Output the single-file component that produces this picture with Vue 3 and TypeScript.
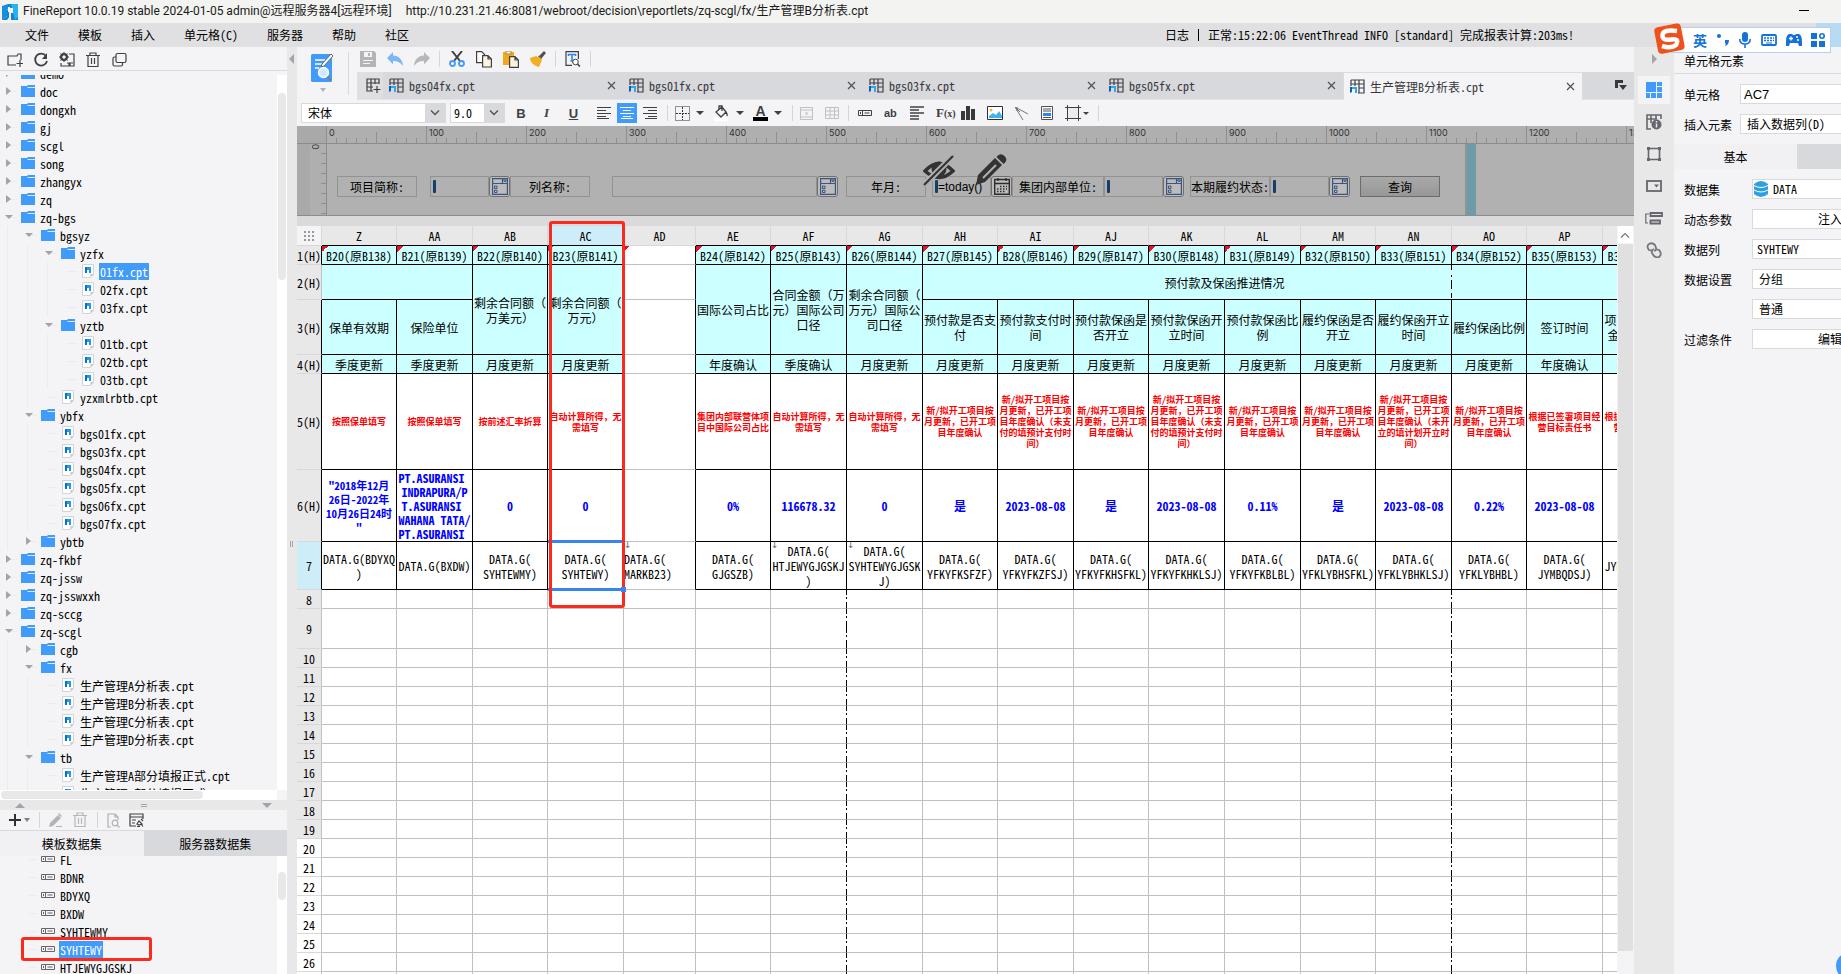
<script setup lang="ts">
import { h, type FunctionalComponent } from 'vue'

interface IconDef { w: number; h: number; s: string }

const stroke = 'fill="none" stroke="#404044" stroke-width="1.2"'
const gridBase = '<path d="M1 1h13v13H8M1 1v6M1 5h13M5 1v6M9 1v13M9 9h5" fill="none" stroke="#404044" stroke-width="1.2"/>'

const icons: Record<string, IconDef> = {
  logo: { w: 16, h: 16, s: '<path d="M0 2l6-2v5l-1 1v6l-5 4z" fill="#1590e0"/><path d="M6 0h10v16H9V9h3V5H8v7l-3 4H0l5-4V6h3V3H6z" fill="#0f86d8"/><path d="M9 0h7v13l-3 3z" fill="#25b4ee"/><path d="M6 4h5v4H9v6H7V8H6z" fill="#f3f3f1"/>' },
  newFolder: { w: 16, h: 16, s: `<path d="M9 13H1V4h9l1-2h3v6M13 8v7M9.500 11.500h6.500" ${stroke}/>` },
  refresh: { w: 16, h: 16, s: '<path d="M13 4a6 6 0 1 0 1 5" fill="none" stroke="#404044" stroke-width="1.8"/><path d="M14 1v6H9z" fill="#404044"/>' },
  gearBox: { w: 16, h: 16, s: `<circle cx="5" cy="5" r="3" fill="none" stroke="#404044" stroke-width="2"/><path d="M5 0v10M0 5h10M1.500 1.500l7 7M8.500 1.500l-7 7" stroke="#404044"/><circle cx="5" cy="5" r="1.500" fill="#f4f4f7"/><path d="M10 2h5v12H2v-3M8 11h2v3M11 14v-3h3" ${stroke}/>` },
  trash: { w: 16, h: 16, s: `<path d="M1 3.500h14M5 3V1h6v2M3 3.500v11h10v-11M6.500 6v6M9.500 6v6" ${stroke}/>` },
  trashOff: { w: 16, h: 16, s: '<path d="M1 3.500h14M5 3V1h6v2M3 3.500v11h10v-11M6.500 6v6M9.500 6v6" fill="none" stroke="#b8b8bc" stroke-width="1.200"/>' },
  copyBox: { w: 16, h: 16, s: `<rect x="5" y="1.500" width="10" height="9" rx="1.500" ${stroke}/><path d="M5 5H3.500Q2 5 2 6.500v6Q2 14 3.500 14H10q1.500 0 1.500-1.500V11" ${stroke}/>` },
  folder: { w: 14, h: 12, s: '<path d="M0 1h6l1-1h7v12H0z" fill="#409bfa"/><path d="M6.500 2.500H14" stroke="#d5e9ff"/>' },
  file: { w: 12, h: 14, s: '<path d="M.5.5h11v10l-3 3h-8z" fill="#fff" stroke="#d4d4d8"/><path d="M11.500 10h-3v3.500z" fill="#c8c8cc"/><path d="M3 3h2v6H3z" fill="#0a6fc8"/><path d="M5 3h4v6H7V6H5z" fill="#1c9ce6"/>' },
  column: { w: 14, h: 6, s: '<path d="M.5.5h13v5H.5zM4.500.5v5M6.500 3h5" fill="none" stroke="#66666a"/><path d="M2 2h1v2H2z" fill="#66666a"/>' },
  columnDark: { w: 14, h: 6, s: '<path d="M.5.5h13v5H.5zM4.500.5v5M6.500 3h5" fill="none" stroke="#404044"/><path d="M2 2h1v2H2z" fill="#404044"/>' },
  plus: { w: 14, h: 14, s: '<path d="M7 1v12M1 7h12" stroke="#303034" stroke-width="2"/>' },
  pencilOff: { w: 14, h: 14, s: '<path d="M0 14l1-4 8-8 3 3-8 8zM9 1l1-1 3 3-1 1z" fill="#b4b4b8"/><path d="M7 13.500h6" stroke="#b4b4b8"/>' },
  pageSearch: { w: 13, h: 15, s: '<path d="M4 14H1V1h7l3 3v3M8 1v3h3" fill="none" stroke="#b0b0b4" stroke-width="1.200"/><circle cx="8" cy="10" r="2.800" fill="none" stroke="#b0b0b4" stroke-width="1.200"/><path d="M10 12l2.500 2.500" stroke="#b0b0b4" stroke-width="1.200"/>' },
  dsEdit: { w: 15, h: 14, s: `<path d="M7 13H1V1h13v5M1 4h13M3 7h4M3 10h3" ${stroke}/><path d="M8 11l2-3 3 3-3 1zM12 6l2 2M8 13.500h3M12 11l2 2.500" ${stroke}/>` },
  big: { w: 24, h: 30, s: '<rect x="0" y="2" width="21" height="28" rx="1.500" fill="#409bfa"/><path d="M4 8h10M4 12h7M4 16h4" stroke="#fff" stroke-width="1.600"/><path d="M20 2l2 2-9 10-3 1 1-3z" fill="#fff" stroke="#66666a"/><circle cx="12.500" cy="20.500" r="5" fill="#d4e9ff" stroke="#fff" stroke-width="1.500"/><path d="M16.500 24.500l3.500 4" stroke="#808084" stroke-width="2"/>' },
  save: { w: 16, h: 16, s: '<path d="M0 0h14l2 2v14H0z" fill="#b4b4b8"/><path d="M4 1h8v5H4z" fill="#f4f4f7"/><path d="M8 2h2v3H8z" fill="#b4b4b8"/><path d="M3 9.500h10M3 12.500h7" stroke="#f4f4f7"/>' },
  undo: { w: 16, h: 14, s: '<path d="M6 0v3.500C12 3.500 15.500 8 16 14 13 10 10 9 6 9v3.500L0 6z" fill="#7cb8f6"/>' },
  redo: { w: 16, h: 14, s: '<path d="M10 0v3.500C4 3.500.500 8 0 14 3 10 6 9 10 9v3.500L16 6z" fill="#b8b8bc"/>' },
  cut: { w: 16, h: 16, s: '<path d="M3 0l8 10M13 0L5 10" stroke="#404044" stroke-width="2"/><circle cx="3.500" cy="12.500" r="2.500" fill="none" stroke="#409bfa" stroke-width="1.800"/><circle cx="12.500" cy="12.500" r="2.500" fill="none" stroke="#409bfa" stroke-width="1.800"/>' },
  copy: { w: 16, h: 17, s: '<path d="M.6.6h5l3 3v8h-8z" fill="#fff" stroke="#404044" stroke-width="1.200"/><path d="M6.600 4.600h5.400l3.400 3.400v8H6.600zM12 4.600v3.400h3.400" fill="#fdf5df" stroke="#404044" stroke-width="1.200"/>' },
  paste: { w: 16, h: 17, s: '<path d="M0 1h11v13H0z" fill="#f0a81c"/><path d="M3 0h5v3H3z" fill="#fff" stroke="#b08030"/><path d="M6.600 5.600h5.400l3.400 3.400v7.400H6.600zM12 5.600v3.400h3.400" fill="#fdf5df" stroke="#404044" stroke-width="1.200"/>' },
  brush: { w: 16, h: 16, s: '<path d="M14 0l2 2-5 6-3-2z" fill="#505058"/><path d="M6 5l6 4-3 7C4 15 0 11 0 7z" fill="#f0b020"/><path d="M8 5l4 3" stroke="#d08810"/>' },
  tSearch: { w: 16, h: 16, s: `<path d="M7 14.400H1V.6h12.400V8" ${stroke}/><path d="M3.500 5V3.500h7V5M7 3.500V10M5.500 10h3" fill="none" stroke="#2f86ea" stroke-width="1.600"/><circle cx="10.500" cy="11" r="2.800" fill="#fff" stroke="#404044"/><path d="M12.500 13l2.500 2.500" stroke="#404044" stroke-width="1.500"/>` },
  gridPlus: { w: 15, h: 15, s: `<path d="M7 13H1V1h12v5M1 5h12M1 9h6M5 1v12M9 1v5M11 8v7M7.500 11.500h7" ${stroke}/>` },
  sheet: { w: 15, h: 15, s: `${gridBase}<path d="M0 8h2v5l-2 1z" fill="#0a60b0"/><path d="M2 8h5v6H5v-4H2z" fill="#35a5e4"/>` },
  close: { w: 9, h: 9, s: '<path d="M1 1l7 7M8 1L1 8" stroke="#505054" stroke-width="1.200"/>' },
  tabList: { w: 12, h: 11, s: '<path d="M0 0h8v3H3v5H0z" fill="#38383c"/><path d="M4 5h8l-4 5z" fill="#38383c"/>' },
  chevron: { w: 10, h: 6, s: '<path d="M1 .5l4 4 4-4" fill="none" stroke="#505054" stroke-width="1.300"/>' },
  chevronUp: { w: 10, h: 6, s: '<path d="M1 5.500l4-4 4 4" fill="none" stroke="#77777a" stroke-width="1.200"/>' },
  alignL: { w: 14, h: 12, s: '<path d="M0 .5h14M0 3.500h9M0 6.500h14M0 9.500h9M0 11.500h12" stroke="#404044" stroke-width="1"/>' },
  alignC: { w: 14, h: 12, s: '<path d="M0 .5h14M3 3.500h8M0 6.500h14M3 9.500h8M1 11.500h12" stroke="#fff" stroke-width="1"/>' },
  alignR: { w: 14, h: 12, s: '<path d="M0 .5h14M5 3.500h9M0 6.500h14M5 9.500h9M2 11.500h12" stroke="#404044" stroke-width="1"/>' },
  border: { w: 15, h: 15, s: '<path d="M.5.5h14v14H.5z" fill="none" stroke="#303034" stroke-dasharray="1 1"/><path d="M7.500 1v13M1 7.500h13" stroke="#303034" stroke-dasharray="2 1"/>' },
  bucket: { w: 16, h: 16, s: '<path d="M0 12h14v4H0z" fill="#fff"/><path d="M2 7l6-5 4 5-5 5zM5 4V1h3v5M12 7q1.500 2 1 4" fill="none" stroke="#404044" stroke-width="1.300"/>' },
  merge: { w: 13, h: 13, s: '<path d="M.5.5h12v12H.5zM.5 3h12M.5 10h12" fill="none" stroke="#c0c0c4"/><path d="M5 5h3v3H5z" fill="#d8d8dc"/>' },
  unmerge: { w: 14, h: 12, s: '<path d="M.5.5h13v11H.5zM.5 4h13M.5 8h13M5 .5v11M9.500.5v11" fill="none" stroke="#c0c0c4"/>' },
  para: { w: 14, h: 14, s: '<path d="M0 1h14M0 4h9M0 7h14M0 10h9M0 13h9" stroke="#404044" stroke-width="1.500"/>' },
  chart: { w: 14, h: 14, s: '<path d="M0 5h4v9H0zM5 0h4v14H5zM10 3h4v11h-4z" fill="#38383c"/>' },
  image: { w: 16, h: 14, s: '<path d="M.5.5h15v13H.5z" fill="#fff" stroke="#303034"/><path d="M2 10l4-3 3 2 3-4 3 5v2H2z" fill="#3fb4f0"/><circle cx="4" cy="4" r="1.500" fill="#f0b840"/>' },
  diag: { w: 14, h: 13, s: '<path d="M0 0l13 7M0 0l8 13" stroke="#77777a" fill="none"/><path d="M0 0l5 5M2 0l0 4" stroke="#77777a" fill="none"/>' },
  doc: { w: 12, h: 14, s: '<path d="M.5.5h11v13H.5z" fill="#fff" stroke="#505054"/><path d="M2 3h8M2 5h8M2 11.500h8" stroke="#505054"/><path d="M2 7h8v3H2z" fill="#2f86ea"/>' },
  rect: { w: 16, h: 16, s: '<path d="M2.500 2.500h11v11h-11z" fill="#ececee"/><path d="M0 2.500h16M0 13.500h16M2.500 0v16M13.500 0v16" stroke="#404044"/>' },
  combo: { w: 16, h: 17, s: '<path d="M.6.6h14.800v15.800H.6zM.6 5.500h14.800M10.500.6v5" fill="none" stroke="#3d5680" stroke-width="1.200"/><path d="M11.500 2h3l-1.500 2zM2.500 8h2.500v2.500H2.500zM2.500 12.200h2.500v2.300H2.500z" fill="none" stroke="#3d5680"/>' },
  calendar: { w: 16, h: 17, s: '<path d="M.7 1.500h14.600v14.800H.7zM.7 5.500h14.600M4 0v3M12 0v3" fill="none" stroke="#2c2c2e" stroke-width="1.400"/><path d="M6 8.500h7M3 11h10M3 13.500h8" stroke="#2c2c2e" stroke-width="1.400" stroke-dasharray="1.500 1.500"/>' },
  eyeOff: { w: 32, h: 32, s: '<path d="M2 17Q16 2 30 17 16 30 2 17z" fill="none" stroke="#333" stroke-width="3.500"/><circle cx="16" cy="15" r="7.500" fill="#333"/><path d="M1 31L31 1" stroke="#b0b0b0" stroke-width="6"/><path d="M1 31L30 2" stroke="#333" stroke-width="2.200"/>' },
  pencil: { w: 32, h: 32, s: '<path d="M1 31l2-10L20 4l7 7L10 28z" fill="#333"/><path d="M8 24L21 11" stroke="#b0b0b0" stroke-width="2"/><path d="M21.500 3l2-2q3-2 6 1t1 6l-2 2z" fill="#333"/>' },
  panelCell: { w: 16, h: 16, s: '<path d="M0 0h10v10H0zM11 0h5v4h-5zM11 5h5v5h-5zM0 11h4v5H0zM5 11h5v5H5zM11 11h5v5h-5z" fill="#409bfa"/>' },
  panelInfo: { w: 16, h: 16, s: '<path d="M5 15H1V1h14v4M1 5h10M5 1v8M10 1v4" fill="none" stroke="#666670" stroke-width="1.600"/><circle cx="10.500" cy="10.500" r="5" fill="#666670"/><path d="M10.500 7v1.500M10.500 9.500v4" stroke="#e8e8e8" stroke-width="1.500"/>' },
  panelFrame: { w: 16, h: 16, s: '<path d="M2.500 2.500h11v11h-11z" fill="none" stroke="#666670" stroke-width="1.600"/><path d="M1 1h3v3H1zM12 1h3v3h-3zM1 12h3v3H1zM12 12h3v3h-3z" fill="#666670"/>' },
  panelWidget: { w: 16, h: 12, s: '<rect x="1" y="1" width="14" height="10" fill="none" stroke="#666670" stroke-width="1.800"/><path d="M8 4.500h5l-2.500 3z" fill="#666670"/>' },
  panelCond: { w: 18, h: 13, s: '<path d="M4 2H.8v9H3" fill="none" stroke="#666670" stroke-width="1.200"/><path d="M5.500 1h11.500v3H5.500zM5.500 8.500h9.500v3H5.500z" fill="none" stroke="#666670" stroke-width="1.800"/>' },
  panelLink: { w: 16, h: 16, s: '<path d="M7 9L3 8Q0 4 3 2t6 1l1 3q1 2-2 3M9 7l4 1q3 3 1 6t-6 0l-2-3q-1-3 2-4" fill="none" stroke="#77777e" stroke-width="1.800"/>' },
  db: { w: 14, h: 16, s: '<path d="M0 3q7-6 14 0v10q-7 6-14 0z" fill="#2f9fe0"/><path d="M0 4.500q7 4 14 0M0 9q7 4 14 0" fill="none" stroke="#fff"/>' },
  sogou: { w: 32, h: 32, s: '<rect x="2" y="2" width="27" height="27" rx="4" fill="#f0511c" transform="rotate(-11 16 16)"/><path d="M23 8Q9 6 8.500 12T17 16.500t5 5.500Q17 26 8 23" fill="none" stroke="#fff" stroke-width="4.500"/>' },
  punct: { w: 14, h: 14, s: '<circle cx="3" cy="3" r="2" fill="#1473d8"/><path d="M9 7h4q0 5-4 6l1-2.500H9z" fill="#1473d8"/>' },
  mic: { w: 12, h: 16, s: '<rect x="3" y="0" width="6" height="10" rx="3" fill="#1473d8"/><path d="M.8 7q0 5 5.200 5t5.200-5M6 12v4" fill="none" stroke="#1473d8" stroke-width="1.600"/>' },
  keys: { w: 16, h: 12, s: '<rect x="1" y="1" width="14" height="10" rx="1" fill="none" stroke="#1473d8" stroke-width="1.800"/><path d="M3 4h10M3 6.500h10" stroke="#1473d8" stroke-width="1.400" stroke-dasharray="2 1"/><path d="M5 9h6" stroke="#1473d8"/>' },
  pad: { w: 16, h: 14, s: '<path d="M3 1h3l1 1h2l1-1h3q3 1 3 8v4h-3l-1-3H4l-1 3H0V9q0-7 3-8z" fill="#1473d8"/><path d="M3 5.500h4M5 3.500v4M10 4h2M11 7h2" stroke="#fff" stroke-width="1.300"/><path d="M4 11h8" stroke="#fff"/>' },
  apps: { w: 14, h: 14, s: '<path d="M0 0h6v6H0zM0 8h6v6H0zM8 8h6v6H8z" fill="#1473d8"/><circle cx="11" cy="3" r="2.200" fill="none" stroke="#1473d8" stroke-width="1.600"/>' },
}

const Ico: FunctionalComponent<{ n: string }> = (p) => {
  const d = icons[p.n]
  return h('svg', { width: d.w, height: d.h, viewBox: `0 0 ${d.w} ${d.h}`, 'aria-hidden': 'true', class: 'ico', innerHTML: d.s })
}
Ico.props = ['n']

const menus = ['文件', '模板', '插入', '单元格(C)', '服务器', '帮助', '社区']

type Kind = 'closed' | 'open' | 'file'
interface Node { level: number; kind: Kind; name: string }
const node = (level: number, kind: Kind, ...names: string[]): Node[] => names.map((name) => ({ level, kind, name }))
const tree: Node[] = [
  ...node(0, 'closed', 'demo', 'doc', 'dongxh', 'gj', 'scgl', 'song', 'zhangyx', 'zq'),
  ...node(0, 'open', 'zq-bgs'),
  ...node(1, 'open', 'bgsyz'),
  ...node(2, 'open', 'yzfx'),
  ...node(3, 'file', '01fx.cpt', '02fx.cpt', '03fx.cpt'),
  ...node(2, 'open', 'yztb'),
  ...node(3, 'file', '01tb.cpt', '02tb.cpt', '03tb.cpt'),
  ...node(2, 'file', 'yzxmlrbtb.cpt'),
  ...node(1, 'open', 'ybfx'),
  ...node(2, 'file', 'bgs01fx.cpt', 'bgs03fx.cpt', 'bgs04fx.cpt', 'bgs05fx.cpt', 'bgs06fx.cpt', 'bgs07fx.cpt'),
  ...node(1, 'closed', 'ybtb'),
  ...node(0, 'closed', 'zq-fkbf', 'zq-jssw', 'zq-jsswxxh', 'zq-sccg'),
  ...node(0, 'open', 'zq-scgl'),
  ...node(1, 'closed', 'cgb'),
  ...node(1, 'open', 'fx'),
  ...node(2, 'file', '生产管理A分析表.cpt', '生产管理B分析表.cpt', '生产管理C分析表.cpt', '生产管理D分析表.cpt'),
  ...node(1, 'open', 'tb'),
  ...node(2, 'file', '生产管理A部分填报正式.cpt', '生产管理B部分填报正式.cpt'),
]
const fields = ['FL', 'BDNR', 'BDYXQ', 'BXDW', 'SYHTEWMY', 'SYHTEWY', 'HTJEWYGJGSKJ']

const tabs = ['bgs04fx.cpt', 'bgs01fx.cpt', 'bgs03fx.cpt', 'bgs05fx.cpt', '生产管理B分析表.cpt']
const rulerMarks = Array.from({ length: 14 }, (_, i) => i * 100)
const panelIcons = ['panelCell', 'panelInfo', 'panelFrame', 'panelWidget', 'panelCond', 'panelLink']

interface Col { id: string; w: number; no: string; upd: string; note: string; val: string; data: string }
const col = (id: string, w: number, no: string, upd: string, note: string, val: string, data: string): Col => ({ id, w, no, upd, note, val, data })
const M = '月度更新'
const note3 = '新/拟开工项目按\n月更新，已开工项\n目年度确认'
const notePay = note3 + '（未支\n付的填预计支付时\n间）'
const noteOpen = note3 + '（未开\n立的填计划开立时\n间）'
const auto = '自动计算所得，无\n需填写'
const duty = '根据已签署项目经\n营目标责任书'
const cols: Col[] = [
  col('Z', 75, 'B20(原B138)', '季度更新', '按照保单填写', '"2018年12月\n26日-2022年\n10月26日24时\n"', 'DATA.G(BDYXQ\n)'),
  col('AA', 76, 'B21(原B139)', '季度更新', '按照保单填写', 'PT.ASURANSI \nINDRAPURA/P\nT.ASURANSI \nWAHANA TATA/\nPT.ASURANSI ', 'DATA.G(BXDW)'),
  col('AB', 75, 'B22(原B140)', M, '按前述汇率折算', '0', 'DATA.G(\nSYHTEWMY)'),
  col('AC', 76, 'B23(原B141)', M, auto, '0', 'DATA.G(\nSYHTEWY)'),
  col('AD', 72, '', '', '', '', 'DATA.G(\nMARKB23)'),
  col('AE', 75, 'B24(原B142)', '年度确认', '集团内部联营体项\n目中国际公司占比', '0%', 'DATA.G(\nGJGSZB)'),
  col('AF', 76, 'B25(原B143)', '季度确认', auto, '116678.32', 'DATA.G(\nHTJEWYGJGSKJ\n)'),
  col('AG', 76, 'B26(原B144)', M, auto, '0', 'DATA.G(\nSYHTEWYGJGSK\nJ)'),
  col('AH', 75, 'B27(原B145)', M, note3, '是', 'DATA.G(\nYFKYFKSFZF)'),
  col('AI', 76, 'B28(原B146)', M, notePay, '2023-08-08', 'DATA.G(\nYFKYFKZFSJ)'),
  col('AJ', 75, 'B29(原B147)', M, note3, '是', 'DATA.G(\nYFKYFKHSFKL)'),
  col('AK', 76, 'B30(原B148)', M, notePay, '2023-08-08', 'DATA.G(\nYFKYFKHKLSJ)'),
  col('AL', 76, 'B31(原B149)', M, note3, '0.11%', 'DATA.G(\nYFKYFKBLBL)'),
  col('AM', 75, 'B32(原B150)', M, note3, '是', 'DATA.G(\nYFKLYBHSFKL)'),
  col('AN', 76, 'B33(原B151)', M, noteOpen, '2023-08-08', 'DATA.G(\nYFKLYBHKLSJ)'),
  col('AO', 75, 'B34(原B152)', M, note3, '0.22%', 'DATA.G(\nYFKLYBHBL)'),
  col('AP', 76, 'B35(原B153)', '年度确认', duty, '2023-08-08', 'DATA.G(\nJYMBQDSJ)'),
  col('AQ', 76, 'B36(原B154)', '年度确认', duty, '', 'DATA.G(\nJYMBXMZJEWYS\n)'),
]
interface Head { t: string; cs?: number; rs?: number; blank?: boolean }
const row2: Head[] = [
  { t: '', cs: 2 }, { t: '剩余合同额（\n万美元）', rs: 2 }, { t: '剩余合同额（\n万元）', rs: 2 }, { t: '', blank: true },
  { t: '国际公司占比', rs: 2 }, { t: '合同金额（万\n元）国际公司\n口径', rs: 2 }, { t: '剩余合同额（\n万元）国际公\n司口径', rs: 2 },
  { t: '预付款及保函推进情况', cs: 8 }, { t: '', cs: 2 },
]
const row3: Head[] = [
  { t: '保单有效期' }, { t: '保险单位' }, { t: '', blank: true }, { t: '预付款是否支\n付' }, { t: '预付款支付时\n间' }, { t: '预付款保函是\n否开立' },
  { t: '预付款保函开\n立时间' }, { t: '预付款保函比\n例' }, { t: '履约保函是否\n开立' }, { t: '履约保函开立\n时间' }, { t: '履约保函比例' }, { t: '签订时间' }, { t: '项目经营目标\n金额(万元) ' },
]
const emptyRows = Array.from({ length: 20 }, (_, i) => i + 8)
</script>

<template>
  <div class="app">
    <header class="title"><Ico n="logo" /><span class="t1">FineReport 10.0.19 stable 2024-01-05 admin@远程服务器4[远程环境]</span><span>http://10.231.21.46:8081/webroot/decision\reportlets/zq-scgl/fx/生产管理B分析表.cpt</span><button class="minimize" aria-label="最小化"></button></header>
    <nav class="menu">
      <button v-for="m in menus" :key="m">{{ m }}</button>
      <div class="log"><span>日志</span><i></i><span>正常:15:22:06 EventThread INFO [standard] 完成报表计算:203ms!</span></div>
    </nav>
    <div class="ime">
      <div class="ime-logo"><Ico n="sogou" /></div>
      <b>英</b><Ico n="punct" /><Ico n="mic" /><Ico n="keys" /><Ico n="pad" /><Ico n="apps" />
    </div>

    <div class="body">
      <aside class="left">
        <div class="ltools"><button v-for="i in ['newFolder', 'refresh', 'gearBox', 'trash', 'copyBox']" :key="i" :aria-label="i"><Ico :n="i" /></button></div>
        <div class="treebox">
          <ul class="tree">
            <li v-for="(n, k) in tree" :key="k">
              <span v-for="g in n.level" :key="g" class="guide"></span>
              <span class="twist" :class="n.kind"></span>
              <span class="nicon"><Ico :n="n.kind === 'file' ? 'file' : 'folder'" /></span>
              <button class="nname" :class="{ hit: n.name === '01fx.cpt' }">{{ n.name }}</button>
            </li>
          </ul>
          <div class="vbar"><i></i></div>
        </div>
        <div class="hbar"><i></i></div>
        <div class="split"><i class="up"></i><i class="eq"></i><i class="down"></i></div>
        <div class="dtools">
          <button aria-label="新增"><Ico n="plus" /></button><i class="caret gray"></i><i class="sep"></i>
          <button aria-label="编辑"><Ico n="pencilOff" /></button><button aria-label="删除"><Ico n="trashOff" /></button><i class="sep"></i>
          <button aria-label="预览"><Ico n="pageSearch" /></button><button aria-label="连接"><Ico n="dsEdit" /></button>
        </div>
        <div class="dtabs"><button class="on">模板数据集</button><button>服务器数据集</button></div>
        <div class="fieldbox">
          <ul>
            <li v-for="f in fields" :key="f" :class="{ marked: f === 'SYHTEWY' }"><Ico n="column" /><button class="nname" :class="{ hit: f === 'SYHTEWY' }">{{ f }}</button></li>
          </ul>
          <div class="vbar low"><i></i></div>
        </div>
      </aside>
      <div class="vsplit"><i class="fold"></i><i class="grip"></i></div>

      <main class="main">
        <div class="top">
          <div class="preview"><button aria-label="预览"><Ico n="big" /></button><i class="caret light"></i></div>
          <div class="topright">
            <div class="quick">
              <button aria-label="保存"><Ico n="save" /></button><button aria-label="撤销"><Ico n="undo" /></button><button aria-label="重做"><Ico n="redo" /></button><i class="sep"></i>
              <button aria-label="剪切"><Ico n="cut" /></button><button aria-label="复制"><Ico n="copy" /></button><button aria-label="粘贴"><Ico n="paste" /></button><button aria-label="格式刷"><Ico n="brush" /></button><i class="sep"></i>
              <button aria-label="查找"><Ico n="tSearch" /></button><i class="sep"></i>
            </div>
            <div class="tabs">
              <button class="newtab" aria-label="新建"><Ico n="gridPlus" /></button>
              <div v-for="(t, i) in tabs" :key="t" class="tab" :class="{ on: i === 4 }"><Ico n="sheet" /><span>{{ t }}</span><button aria-label="关闭"><Ico n="close" /></button></div>
              <button class="tablist" aria-label="标签列表"><Ico n="tabList" /></button>
            </div>
          </div>
        </div>
        <div class="format">
          <label class="sel font"><select aria-label="字体"><option>宋体</option></select><span><Ico n="chevron" /></span></label>
          <label class="sel size"><select aria-label="字号"><option>9.0</option></select><span><Ico n="chevron" /></span></label>
          <button class="f b">B</button><button class="f i">I</button><button class="f u">U</button>
          <button class="al"><Ico n="alignL" /></button><button class="al on"><Ico n="alignC" /></button><button class="al"><Ico n="alignR" /></button>
          <i class="sep"></i>
          <button class="dd"><Ico n="border" /><i class="caret"></i></button>
          <button class="dd"><Ico n="bucket" /><i class="caret"></i></button>
          <button class="dd"><span class="fontcolor">A</span><i class="caret"></i></button>
          <i class="sep"></i>
          <div class="grp"><button aria-label="合并"><Ico n="merge" /></button><button aria-label="拆分"><Ico n="unmerge" /></button></div>
          <i class="sep"></i>
          <div class="grp">
            <button aria-label="数据列"><Ico n="columnDark" /></button><button class="ab">ab</button><button aria-label="富文本"><Ico n="para" /></button><button class="fx">F<small>(x)</small></button>
            <button aria-label="图表"><Ico n="chart" /></button><button aria-label="图片"><Ico n="image" /></button><button aria-label="斜线"><Ico n="diag" /></button><button aria-label="子报表"><Ico n="doc" /></button><button class="rc" aria-label="悬浮元素"><Ico n="rect" /><i class="caret small"></i></button>
          </div>
          <i class="sep"></i>
        </div>

        <section class="param">
          <div class="ruler"><span v-for="r in rulerMarks" :key="r">{{ r }}</span></div>
          <div class="prow">
            <div class="vruler"><span>0</span></div>
            <div class="canvas">
              <span class="lab w80">项目简称:</span>
              <span class="inp w59 g13"><i></i><input aria-label="项目简称" /></span><button class="pick" aria-label="选择"><Ico n="combo" /></button>
              <span class="lab w80">列名称:</span>
              <span class="inp w205 g22"><input aria-label="列名称" /></span><button class="pick" aria-label="选择"><Ico n="combo" /></button>
              <span class="lab w80 g8">年月:</span>
              <span class="inp w59 g7"><i></i><input aria-label="年月" value="=today()" /></span><button class="pick" aria-label="日期"><Ico n="calendar" /></button>
              <span class="lab w92">集团内部单位:</span>
              <span class="inp w59"><i></i><input aria-label="集团内部单位" /></span><button class="pick" aria-label="选择"><Ico n="combo" /></button>
              <span class="lab w80 g7">本期履约状态:</span>
              <span class="inp w59"><i></i><input aria-label="本期履约状态" /></span><button class="pick" aria-label="选择"><Ico n="combo" /></button>
              <button class="query">查询</button>
              <div class="hover"><Ico n="eyeOff" /><Ico n="pencil" /></div>
            </div>
            <div class="handle"></div>
          </div>
        </section>
        <div class="gap"></div>

        <div class="sheetwrap">
          <div class="sheet">
            <table>
              <colgroup><col class="rhcol" /><col v-for="c in cols" :key="c.id" :style="{ width: c.w + 'px' }" /></colgroup>
              <thead><tr class="hd"><th class="corner"><i></i></th><th v-for="c in cols" :key="c.id" :class="{ k: c.no, act: c.id === 'AC' }">{{ c.id }}</th></tr></thead>
              <tbody>
                <tr class="h19"><th class="k">1(H)</th><td v-for="c in cols" :key="c.id" class="flag" :class="c.no ? 'cy' : 'kr'">{{ c.no }}</td></tr>
                <tr class="h35"><th>2(H)</th><td v-for="(x, i) in row2" :key="i" :class="x.blank ? 'kr' : 'cy'" :colspan="x.cs" :rowspan="x.rs">{{ x.t }}</td></tr>
                <tr class="h55"><th class="k">3(H)</th><td v-for="(x, i) in row3" :key="i" :class="x.blank ? 'kr' : 'cy'">{{ x.t }}</td></tr>
                <tr class="h19"><th class="k">4(H)</th><td v-for="c in cols" :key="c.id" :class="c.no ? 'cy' : 'kr'">{{ c.upd }}</td></tr>
                <tr class="h96"><th class="k">5(H)</th><td v-for="c in cols" :key="c.id" class="note" :class="c.no ? 'kk' : 'kr'">{{ c.note }}</td></tr>
                <tr class="h72"><th class="k">6(H)</th><td v-for="c in cols" :key="c.id" class="val" :class="[c.no ? 'kk' : 'kr', { narrow: c.id === 'Z' }]">{{ c.val }}</td></tr>
                <tr class="h48"><th class="k act">7</th><td v-for="c in cols" :key="c.id" :class="[c.no ? 'kk' : 'kr lft', { cur: c.id === 'AC', expand: ['AD', 'AF', 'AG'].includes(c.id) }]">{{ c.data }}</td></tr>
                <tr v-for="r in emptyRows" :key="r" :class="r === 9 ? 'h40' : 'h19'"><th :class="{ wh: r > 19 }">{{ r }}</th><td v-for="c in cols" :key="c.id" :class="{ pb: c.id === 'AF' || c.id === 'AN' }"></td></tr>
              </tbody>
            </table>
            <i class="pageline"></i>
            <div class="mark"></div>
          </div>
          <div class="sbar"><button aria-label="向上"><Ico n="chevronUp" /></button><i></i></div>
        </div>
      </main>

      <div class="strip"><i class="fold r"></i><button v-for="(p, i) in panelIcons" :key="p" :class="{ on: i === 0 }" :aria-label="p"><Ico :n="p" /></button></div>

      <aside class="props">
        <h2>单元格元素</h2>
        <div class="form">
          <label class="r1"><span>单元格</span><input class="sans" value="AC7" /></label>
          <label class="r1"><span>插入元素</span><select><option>插入数据列(D)</option></select></label>
        </div>
        <div class="ptabs"><button class="on">基本</button><button aria-label="高级"></button></div>
        <div class="form two">
          <label class="r2"><span>数据集</span><span class="box"><Ico n="db" /><select><option>DATA</option></select></span></label>
          <div class="r2"><span>动态参数</span><button>注入</button></div>
          <label class="r2"><span>数据列</span><select class="tight"><option>SYHTEWY</option></select></label>
          <label class="r2"><span>数据设置</span><select><option>分组</option></select></label>
          <label class="r2"><span></span><select aria-label="分组方式"><option>普通</option></select></label>
          <div class="r2"><span>过滤条件</span><button>编辑</button></div>
        </div>
        <div class="bubble"></div>
      </aside>
    </div>
  </div>
</template>

<style>
body { margin: 0; overflow: hidden; }
.ico { display: block; flex: none; }
</style>
<style scoped>
.app { position: relative; height: 100vh; display: flex; flex-direction: column; overflow: hidden; background: #f4f4f7; color: #000; font: 12px/15px "Noto Sans Mono CJK SC", "Noto Sans CJK SC", monospace; }
*, *::before, *::after { box-sizing: border-box; }
button, select, input { font: inherit; color: inherit; border: 0; padding: 0; margin: 0; background: none; border-radius: 0; outline: 0; appearance: none; text-align: left; min-width: 0; white-space: pre; }
button { display: block; flex: none; }
ul { list-style: none; margin: 0; padding: 0; }
i { font-style: normal; flex: none; }
.title { height: 23px; flex: none; background: #f3f3f1; display: flex; align-items: center; padding-left: 2px; font-family: Roboto, "Noto Sans CJK SC", sans-serif; white-space: pre; color: #1a1a1a; }
.t1 { margin: 0 14px 0 5px; }
.minimize { width: 10px; height: 1px; background: #000; margin: 0 32px 2px auto; }
.menu { height: 24px; flex: none; background: linear-gradient(90deg, transparent calc(100% - 25px), #b6dbf2 0), #e0e0e2; display: flex; align-items: center; gap: 29px; padding: 0 0 1px 25px; }
.log { margin: 0 267px 0 auto; display: flex; align-items: center; gap: 9px; white-space: pre; }
.log i { width: 1px; height: 12px; background: #000; }
.ime { position: absolute; z-index: 5; right: 10px; top: 27px; height: 26px; width: 160px; padding: 0 5px 0 21px; background: #fff; border: 1px solid #b8d0ec; display: flex; align-items: center; justify-content: space-between; }
.ime b { color: #1473d8; font-size: 14px; }
.ime-logo { position: absolute; left: -18px; top: -5px; }
.body { flex: 1; min-height: 0; display: flex; }

.left { width: 287px; flex: none; display: flex; flex-direction: column; min-height: 0; }
.ltools { height: 28px; flex: none; padding: 5px 7px 2px; display: flex; gap: 10px; align-items: flex-start; background: linear-gradient(#dadadd, #dadadd) 0 23px / 100% 1px no-repeat; }
.treebox { flex: 1; min-height: 0; display: flex; overflow: hidden; }
.tree { flex: 1; margin-top: -11px; min-width: 0; }
.tree li { height: 18px; display: flex; align-items: center; padding-left: 1px; }
.guide { width: 20px; height: 18px; flex: none; background: linear-gradient(#ececef, #ececef) 6px 0 / 1px 100% no-repeat; }
.twist { width: 20px; height: 18px; flex: none; position: relative; background: linear-gradient(#ececef, #ececef) 6px 9px / 10px 1px no-repeat; }
.twist::after { content: ""; position: absolute; }
.closed::after { left: 5px; top: 5px; border-left: 5px solid #a4a4a8; border-top: 4px solid transparent; border-bottom: 4px solid transparent; }
.open::after { left: 4px; top: 7px; border-top: 4px solid #a4a4a8; border-left: 4px solid transparent; border-right: 4px solid transparent; }
.nicon { width: 18px; flex: none; display: flex; }
.file + .nicon { padding-left: 1px; }
.nname { padding: 0 1px; height: 17px; line-height: 17px; }
.nname.hit { background: #409bfa; color: #fff; }
.vbar { width: 10px; flex: none; background: #fff; padding: 18px 1px 0; }
.vbar i { display: block; height: 187px; border-radius: 4px; background: #e8e8e8; }
.vbar.low { padding-top: 16px; }
.vbar.low i { height: 28px; }
.hbar { height: 10px; flex: none; background: #fff; padding: 1px; margin-right: 10px; }
.hbar i { display: block; width: 202px; height: 8px; border-radius: 4px; background: #e8e8e8; }
.split { height: 10px; flex: none; background: #e8e8e8; display: flex; align-items: center; justify-content: space-between; padding: 0 15px; }
.up { border: 5px solid transparent; border-top: 0; border-bottom-color: #a4a4a8; }
.down { border: 5px solid transparent; border-bottom: 0; border-top-color: #a4a4a8; }
.eq { width: 6px; height: 3px; border: solid #a4a4a8; border-width: 1px 0; }
.dtools { height: 21px; flex: none; display: flex; align-items: center; gap: 9px; padding-left: 8px; border-bottom: 1px solid #dadadd; }
.dtools .caret { margin-left: -7px; }
.sep { width: 1px; height: 16px; background: #d6d6da; }
.caret { width: 0; height: 0; border: 4px solid transparent; border-bottom: 0; border-top-color: #404044; }
.caret.gray { border-width: 4px 3px 0; border-top-color: #808084; }
.caret.light { border-width: 4px 3px 0; border-top-color: #b4b4b8; }
.dtabs { height: 25px; flex: none; display: flex; }
.dtabs button { flex: 1; text-align: center; background: #d8d9dd; }
.dtabs .on { background: #f1f1f3; }
.fieldbox { height: 118px; flex: none; display: flex; overflow: hidden; }
.fieldbox ul { flex: 1; margin-top: -6px; }
.fieldbox li { height: 18px; display: flex; align-items: center; gap: 4px; padding-left: 41px; background: linear-gradient(#ececef, #ececef) 28px 9px / 9px 1px no-repeat; }
.marked { position: relative; }
.marked::after { content: ""; position: absolute; left: 21px; top: -3px; width: 131px; height: 24px; border: 3px solid #fc2a1c; border-radius: 3px; }
.vsplit { width: 10px; flex: none; background: #e8e8e8; position: relative; }
.fold { position: absolute; left: 2px; top: 7px; border: 5px solid transparent; border-left: 0; border-right-color: #a4a4a8; }
.grip { position: absolute; left: 3px; top: 494px; width: 3px; height: 6px; border: solid #a4a4a8; border-width: 0 1px; }

.main { flex: 1; min-width: 0; display: flex; flex-direction: column; }
.top { height: 53px; flex: none; display: flex; }
.preview { width: 52px; height: 43px; margin-top: 5px; border-right: 1px solid #dadadd; display: flex; flex-direction: column; align-items: center; gap: 6px; padding-left: 1px; }
.topright { flex: 1; margin-left: 8px; min-width: 0; display: flex; flex-direction: column; }
.quick { height: 25px; display: flex; align-items: center; gap: 11px; padding: 0 0 1px 3px; }
.quick .sep { margin: 0 -2px; }
.tabs { height: 28px; background: #d8d9dd; display: flex; align-items: center; border-bottom: 1px solid #e4e4e7; }
.newtab { width: 26px; height: 27px; background: #dfdfe2; padding-left: 9px; }
.tab { width: 240px; height: 27px; display: flex; align-items: center; gap: 5px; padding: 0 7px 0 6px; color: #38383c; }
.tab.on { background: #f4f4f7; border: solid #dcdce0; border-width: 1px 1px 0; height: 28px; }
.tab button { margin-left: auto; }
.tablist { margin: 0 7px 0 auto; }
.format { height: 26px; flex: none; display: flex; align-items: center; padding-left: 4px; }
.format .sep { margin: 0 7px; }
.format .grp + .sep { margin: 0 9px; }
.format .dd + .sep { margin-left: 0; }
.sel { display: flex; height: 20px; background: #fff; border: 1px solid #d8d9dd; margin-right: 4px; }
.sel select { flex: 1; padding-left: 6px; line-height: 18px; }
.sel > span { width: 20px; background: #d8d9dd; display: flex; align-items: center; justify-content: center; }
.font { width: 145px; }
.size { width: 55px; }
.size select { padding-left: 3px; }
.f { width: 27px; text-align: center; font: bold 13px "Liberation Sans", sans-serif; color: #404044; }
.f.b { width: 24px; }
.f.i { font-style: italic; font-family: "Liberation Serif", serif; }
.f.u { text-decoration: underline; }
.al { width: 20px; height: 20px; padding: 0 3px; margin-left: 3px; }
.u + .al { margin-left: 7px; }
.al.on { background: #409bfa; }
.dd { display: flex; align-items: center; gap: 6px; width: 39px; }
.fontcolor { width: 15px; height: 16px; border-bottom: 4px solid #000; font: bold 14px/12px "Liberation Sans", sans-serif; text-align: center; color: #404044; }
.grp { display: flex; align-items: center; gap: 12px; }
.ab { font: bold 11px/14px "Liberation Sans", sans-serif; width: 14px; color: #404044; }
.fx { font: bold 13px/14px "Liberation Serif", serif; width: 17px; color: #404044; margin-right: -4px; }
.fx small { font-size: 10px; }
.rc { display: flex; align-items: center; gap: 2px; }
.caret.small { border-width: 3px 3px 0; }

.param { height: 90px; flex: none; background: #a9a9a9; overflow: hidden; color: #000; }
.ruler { height: 17px; margin-left: 29px; display: flex; overflow: hidden; background: repeating-linear-gradient(90deg, #8f8f8f 0 1px, transparent 1px 50px) 0 100% / 100% 11px no-repeat, repeating-linear-gradient(90deg, #8f8f8f 0 1px, transparent 1px 10px) 0 100% / 100% 5px no-repeat, #afafaf; }
.ruler span { width: 100px; flex: none; border-left: 1px solid #8f8f8f; padding-left: 2px; font: 9px/14px Inter, "Liberation Sans", sans-serif; color: #333; }
.prow { height: 73px; display: flex; background: #b1b1b1; border-top: 1px solid #8c8c8c; border-bottom: 1px solid #8c8c8c; }
.vruler { width: 30px; flex: none; border-right: 1px solid #8c8c8c; background: repeating-linear-gradient(#8f8f8f 0 1px, transparent 1px 10px) 24px 9px / 5px 100% no-repeat, linear-gradient(90deg, #a9a9a9 13px, #afafaf 13px); }
.vruler span { display: block; width: 8px; margin-left: 14px; writing-mode: vertical-rl; font: 9px/8px Inter, sans-serif; color: #333; }
.canvas { position: relative; width: 1140px; flex: none; display: flex; align-items: flex-start; padding: 32px 0 0 10px; border-right: 2px solid #939393; }
.lab, .inp { height: 21px; flex: none; border: 1px solid #939393; display: flex; align-items: center; white-space: pre; overflow: hidden; }
.lab { justify-content: center; }
.w80 { width: 80px; }
.w59 { width: 59px; }
.w205 { width: 205px; }
.w92 { width: 92px; }
.g7 { margin-left: 6px; }
.g8 { margin-left: 8px; }
.g13 { margin-left: 13px; }
.g22 { margin-left: 22px; }
.inp i { width: 3px; height: 13px; margin-left: 2px; background: #12406a; border-radius: 1px; }
.inp input { flex: 1; width: 10px; font: 12px "Liberation Sans", sans-serif; }
.pick { width: 21px; height: 21px; border: 1px solid #6f6f6f; border-radius: 3px; padding: 1px 2px; background: #bcbcbc; }
.query { width: 80px; height: 21px; margin-left: 10px; text-align: center; border: 1px solid #6c6c6c; background: linear-gradient(#a9a9a9, #979797); }
.hover { position: absolute; left: 596px; top: 10px; display: flex; gap: 20px; }
.handle { width: 9px; background: #6e9ba8; }
.gap { height: 10px; flex: none; background: #dadadc; }

.sheetwrap { flex: 1; min-height: 0; display: flex; }
.sheet { flex: 1; min-width: 0; overflow: clip; overflow-clip-margin: 6px; position: relative; background: #fff; }
table { width: 100%; table-layout: fixed; border-collapse: separate; border-spacing: 0; }
.rhcol { width: 25px; }
th, td { padding: 0; border: solid #c0c0c0; border-width: 0 1px 1px 0; text-align: center; vertical-align: middle; white-space: pre; font-weight: 400; overflow: hidden; line-height: 15px; }
th { background: #e8e8e8; border-color: #d8d8da; overflow: visible; }
tbody th { border-right-color: #c0c0c0; }
.hd { height: 20px; }
.h19 { height: 19px; }
.h35 { height: 35px; }
.h40 { height: 40px; }
.h48 { height: 48px; }
.h55 { height: 55px; }
.h72 { height: 72px; }
.h96 { height: 96px; }
.hd th.k { border-bottom-color: #000; }
tbody th.k { border-right-color: #000; }
.act { background: #cdedf9; }
th.corner { background: #f4f4f7; }
.corner i { display: block; width: 10px; height: 10px; margin: 0 auto; background: repeating-linear-gradient(90deg, transparent 0 2px, #f4f4f7 2px 4px), repeating-linear-gradient(#98989c 0 2px, transparent 2px 4px); }
.cy { background-color: #ccffff; border-color: #000; }
.kk { border-color: #000; }
.kr { border-right-color: #000; }
.flag { background-image: linear-gradient(135deg, #e8112d 50%, transparent 50%); background-size: 6px 6px; background-repeat: no-repeat; }
.note { color: #f00; font-weight: 700; font-size: 9px; line-height: 11px; }
.val { color: #00f; font-weight: 700; line-height: 14px; }
.narrow { font-size: 11px; }
.lft { text-align: left; }
.wh { background: #fff; }
.cur, .expand { position: relative; overflow: visible; }
.cur::after { content: ""; position: absolute; left: 0; right: -1px; top: -2px; bottom: -2px; border: solid #3a84ee; border-width: 3px 0; }
.cur::before { content: ""; position: absolute; right: -3px; bottom: -3px; width: 5px; height: 5px; background: #3a84ee; z-index: 3; }
.expand::before { content: "↓"; position: absolute; left: 0; top: 0; color: #666; font: 9px/7px "DejaVu Sans", sans-serif; }
.pb { border-right: 1px solid transparent; background: repeating-linear-gradient(#000 0 5px, #fff 5px 7px, #000 7px 9px, #fff 9px 12px, #000 12px 19px) 100% 0 / 1px 100% no-repeat border-box; }
.pageline { position: absolute; left: 1154px; top: 39px; width: 1px; height: 34px; background: repeating-linear-gradient(#000 0 5px, #ccffff 5px 10px, #000 10px 12px, #ccffff 12px 15px, #000 15px 24px, #ccffff 24px 28px); }
.mark { position: absolute; left: 252px; top: -5px; width: 76px; height: 387px; border: 3px solid #fc2a1c; border-radius: 3px; z-index: 2; }
.sbar { width: 17px; flex: none; background: #f4f4f7; padding: 0 1px; z-index: 3; }
.sbar button { width: 100%; height: 17px; background: #fff; padding: 0 2px; margin-bottom: 1px; }
.sbar i { display: block; height: 707px; background: #e0e0e0; }

.strip { width: 40px; flex: none; background: #e8e8e8; position: relative; display: flex; flex-direction: column; align-items: center; gap: 4px; padding-top: 29px; z-index: 3; }
.strip .fold { left: 18px; border: 5px solid transparent; border-right: 0; border-left-color: #a4a4a8; }
.strip button { width: 32px; height: 28px; display: flex; align-items: center; justify-content: center; }
.strip .on { background: #f4f4f7; }
.props { width: 167px; flex: none; overflow: hidden; position: relative; background: #f4f4f7; z-index: 3; }
.props h2 { margin: 0; height: 27px; padding: 6px 0 0 10px; font: inherit; border-bottom: 1px solid #dadadd; }
.form { width: 234px; padding: 10px 0 10px 10px; display: flex; flex-direction: column; gap: 10px; }
.r1, .r2 { height: 20px; display: grid; grid-template-columns: 56px 1fr; align-items: center; }
.r2 { grid-template-columns: 68px 1fr; }
.r1 > :last-child, .r2 > :last-child { height: 20px; border: 1px solid #d8d9dd; background: #fff; width: 100%; padding-left: 6px; line-height: 18px; }
.r1 > .sans { font: 13px "Liberation Sans", sans-serif; padding-left: 3px; }
.r2 > button:last-child { text-align: center; padding: 0; }
.r2 > .box { display: flex; align-items: center; gap: 5px; padding-left: 1px; }
.r2 > .tight { padding-left: 4px; }
.ptabs { height: 25px; width: 246px; display: flex; }
.ptabs button { flex: 1; text-align: center; background: #d8d9dd; }
.ptabs .on { background: #f1f1f3; }
.bubble { position: absolute; right: -23px; bottom: -6px; width: 28px; height: 28px; border-radius: 50%; background: #409bfa; }
</style>
